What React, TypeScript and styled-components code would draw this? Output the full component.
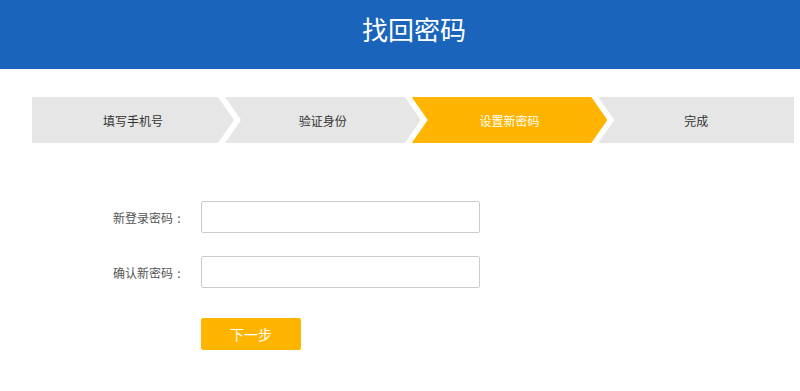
import React from 'react'
import styled, { createGlobalStyle } from 'styled-components'

const GlobalStyle = createGlobalStyle`
  html, body {
    margin: 0;
    padding: 0;
    background: #fff;
  }
  body {
    font-family: "Noto Sans CJK SC", "Noto Sans", sans-serif;
  }
`

const Page = styled.div`
  width: 800px;
  min-height: 391px;
  background: #fff;
`

const Header = styled.header`
  height: 69px;
  background: #1a65bb;
  display: flex;
  align-items: center;
  justify-content: center;
  padding-left: 28px;
`

const Title = styled.h1`
  margin: 0 0 12px;
  color: #fff;
  font-size: 26px;
  font-weight: normal;
`

const Steps = styled.ol`
  display: flex;
  list-style: none;
  margin: 28px 0 0 32px;
  padding: 0;
  width: 762px;
  height: 46px;
`

const TIP = 16
const GAP = 7

const Step = styled.li<{ $active?: boolean; $first?: boolean; $last?: boolean }>`
  flex: ${(p) => (p.$first ? '0 0 202px' : '1')};
  display: flex;
  align-items: center;
  justify-content: center;
  margin-left: ${(p) => (p.$first ? 0 : -(TIP - GAP))}px;
  background: ${(p) => (p.$active ? '#ffb400' : '#e6e6e6')};
  color: ${(p) => (p.$active ? '#fff' : '#333')};
  font-size: 12px;
  clip-path: ${(p) => {
    const right = p.$last
      ? '100% 0, 100% 100%'
      : `calc(100% - ${TIP}px) 0, 100% 50%, calc(100% - ${TIP}px) 100%`
    const left = p.$first ? '0 100%' : `0 100%, ${TIP}px 50%`
    return `polygon(0 0, ${right}, ${left})`
  }};
`

const Form = styled.form`
  display: grid;
  grid-template-columns: 185px 279px;
  column-gap: 16px;
  row-gap: 23px;
  margin-top: 58px;
  align-items: center;
`

const Label = styled.label`
  text-align: right;
  font-size: 12px;
  color: #555;
`

const Colon = styled.span`
  display: inline-block;
  width: 12px;
  text-align: center;
`

const Input = styled.input`
  box-sizing: border-box;
  height: 32px;
  width: 279px;
  border: 1px solid #ccc;
  border-radius: 2px;
  padding: 0 8px;
  outline: none;
  background: #fff;
`

const Button = styled.button`
  grid-column: 2;
  margin-top: 7px;
  width: 100px;
  height: 32px;
  border: none;
  border-radius: 2px;
  background: #ffb400;
  color: #fff;
  font-family: inherit;
  font-size: 14px;
  cursor: pointer;
`

const steps = ['填写手机号', '验证身份', '设置新密码', '完成']

export default function App() {
  return (
    <Page>
      <GlobalStyle />
      <Header>
        <Title>找回密码</Title>
      </Header>
      <Steps>
        {steps.map((s, i) => (
          <Step key={s} $first={i === 0} $last={i === steps.length - 1} $active={i === 2}>
            {s}
          </Step>
        ))}
      </Steps>
      <Form onSubmit={(e) => e.preventDefault()}>
        <Label htmlFor="pwd">
          新登录密码<Colon>:</Colon>
        </Label>
        <Input id="pwd" type="password" />
        <Label htmlFor="pwd2">
          确认新密码<Colon>:</Colon>
        </Label>
        <Input id="pwd2" type="password" />
        <Button type="submit">下一步</Button>
      </Form>
    </Page>
  )
}
